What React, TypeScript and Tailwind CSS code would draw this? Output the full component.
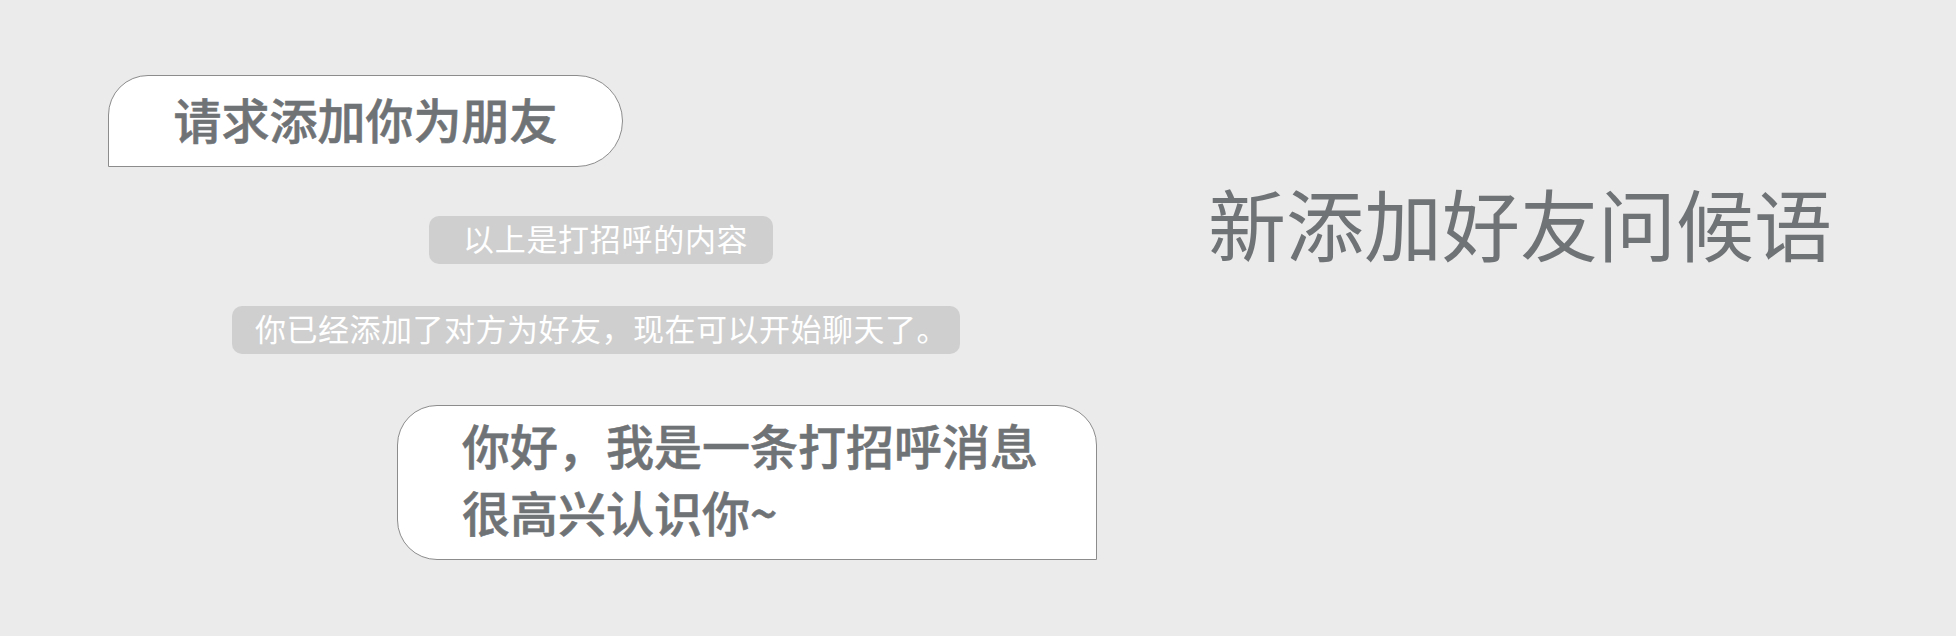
const font = { fontFamily: '"Noto Sans CJK SC", "Noto Sans", sans-serif' };

export default function App() {
  return (
    <div className="flex h-[636px] w-[1956px] bg-[#ebebeb] text-[#707376]" style={font}>
      {/* 左侧：聊天气泡 */}
      <div className="flex w-[1110px] shrink-0 flex-col items-start pt-[75px]">
        <div className="ml-[108px] flex h-[92px] w-[515px] items-center justify-center rounded-tl-[40px] rounded-r-[46px] border border-[#8c8c8c] bg-white pb-[7px]">
          <span className="text-[48px] font-medium leading-none [-webkit-text-stroke:0.6px_#707376]">请求添加你为朋友</span>
        </div>

        <div className="ml-[429px] mt-[49px] flex h-[48px] w-[344px] items-center rounded-[10px] bg-[#cfcfcf] pb-[5px] pl-[34px]">
          <span className="text-[31px] font-normal leading-none tracking-[0.7px] text-white">以上是打招呼的内容</span>
        </div>

        <div className="ml-[232px] mt-[42px] flex h-[48px] w-[728px] items-center rounded-[10px] bg-[#cfcfcf] pb-[5px] pl-[23px]">
          <span className="text-[31px] font-normal leading-none tracking-[0.5px] text-white">你已经添加了对方为好友，现在可以开始聊天了。</span>
        </div>

        <div className="ml-[397px] mt-[51px] h-[155px] w-[700px] rounded-[40px] rounded-br-none border border-[#8c8c8c] bg-white pl-[64px] pt-[5px]">
          <p className="text-[48px] font-medium leading-[67px] [-webkit-text-stroke:0.6px_#707376]">
            你好，我是一条打招呼消息
            <br />
            很高兴认识你~
          </p>
        </div>
      </div>

      {/* 右侧：标题 */}
      <div className="pt-[183px]">
        <h1 className="ml-[98px] text-[78px] font-normal leading-none">新添加好友问候语</h1>
      </div>
    </div>
  );
}
